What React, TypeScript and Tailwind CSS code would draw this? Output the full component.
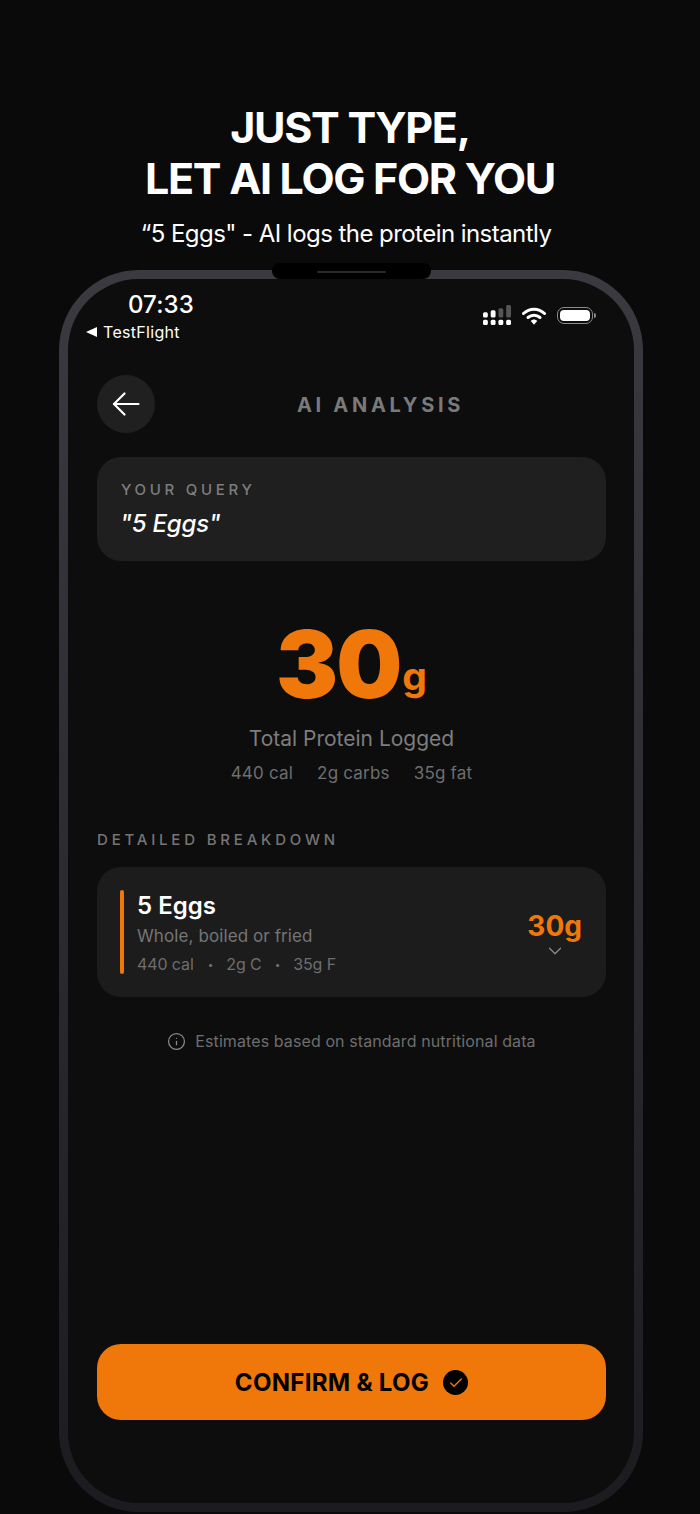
import React from "react";
import { ChevronDown, Info, Check } from "lucide-react";

const font = { fontFamily: "Inter, 'Noto Sans', sans-serif" };

function StatusIcons() {
  return (
    <div className="flex items-center">
      <svg width="28" height="21" viewBox="0 0 29 20" preserveAspectRatio="none" className="block">
        <rect x="0" y="7" width="5" height="5" rx="1.5" fill="#fff" />
        <rect x="0" y="14" width="5" height="5" rx="1.5" fill="#fff" />
        <rect x="8" y="5" width="5" height="7" rx="1.5" fill="#fff" />
        <rect x="8" y="14" width="5" height="5" rx="1.5" fill="#fff" />
        <rect x="16" y="3" width="5" height="9" rx="1.5" fill="#555" />
        <rect x="16" y="14" width="5" height="5" rx="1.5" fill="#fff" />
        <rect x="24" y="0" width="5" height="12" rx="1.5" fill="#555" />
        <rect x="24" y="14" width="5" height="5" rx="1.5" fill="#fff" />
      </svg>
      <svg width="24" height="20" viewBox="0 0 24 20" className="ml-[11px] block">
        <path d="M1.5 7.5C7.5 1.8 16.5 1.8 22.5 7.5" fill="none" stroke="#fff" strokeWidth="3" strokeLinecap="round" />
        <path d="M6 11.5C9.5 8.5 14.5 8.5 18 11.5" fill="none" stroke="#fff" strokeWidth="3" strokeLinecap="round" />
        <path d="M8.8 15C10.5 13 13.5 13 15.2 15L12 18.8Z" fill="#fff" />
      </svg>
      <div className="relative ml-[11px] h-[17px] w-[36px] rounded-[7px] border border-[#8a8a8a] p-[2px]">
        <div className="h-full w-full rounded-[4px] bg-white" />
        <div className="absolute right-[-4px] top-[5px] h-[5px] w-[2px] rounded-r bg-[#8a8a8a]" />
      </div>
    </div>
  );
}

export default function App() {
  return (
    <div className="h-[1514px] w-[700px] overflow-hidden bg-[#0a0a0a] text-white" style={font}>
      <div className="flex h-[263px] flex-col items-center pt-[102px]">
        <h1 className="text-center text-[43px] font-bold uppercase leading-[51px] tracking-[-1.3px] text-white">
          Just type,
          <br />
          Let AI log for you
        </h1>
        <p className="mt-[14px] pr-[8px] text-[24px] leading-[32px] tracking-[-0.55px] text-white">“5 Eggs" - AI logs the protein instantly</p>
      </div>

      <div className="relative mx-[59px] mt-[7px] h-[1242px] w-[584px] rounded-[80px] bg-gradient-to-b from-[#3a3a40] to-[#1c1c20] p-[9px]">
        <div className="absolute left-[213px] top-[-7px] flex h-[16px] w-[159px] justify-center rounded-full bg-black pt-[8px]">
          <div className="h-[2px] w-[69px] rounded-full bg-[#2a2a2a]" />
        </div>

        <div className="flex h-full flex-col rounded-[71px] bg-[#0d0d0d] pl-[29px] pr-[28px]">
          <div className="flex h-[66px] items-start justify-between pr-[13px] pt-[14px]">
            <div className="-ml-[11px] flex flex-col">
              <span className="ml-[42px] text-[24px] font-medium leading-[24px] tracking-[0.1px] text-white">07:33</span>
              <div className="mt-[5px] flex items-center gap-[6px]">
                <svg width="11" height="10" viewBox="0 0 11 10"><path d="M11 0V10L0 5Z" fill="#fff" /></svg>
                <span className="text-[16px] font-normal leading-[20px] tracking-[0.3px] text-white">TestFlight</span>
              </div>
            </div>
            <div className="pt-[12px]">
              <StatusIcons />
            </div>
          </div>

          <div className="mt-[30px] flex items-center">
            <button className="flex h-[58px] w-[58px] items-center justify-center rounded-full bg-[#202020]">
              <svg width="28" height="24" viewBox="0 0 28 24" fill="none" stroke="#fff" strokeWidth="2.2" strokeLinecap="round" strokeLinejoin="round">
                <path d="M26.5 12H2" />
                <path d="M12.5 1.5 2 12l10.5 10.5" />
              </svg>
            </button>
            <div className="flex-1 pt-[1px] text-center text-[20px] font-bold leading-[24px] tracking-[3.7px] text-[#7a7a7a]">AI ANALYSIS</div>
          </div>

          <div className="mt-[24px] flex h-[104px] flex-col rounded-[24px] bg-[#1f1f1f] px-[24px] pt-[24px]">
            <span className="text-[15px] font-medium leading-[18px] tracking-[3.7px] text-[#7d7d7d]">YOUR QUERY</span>
            <span className="mt-[10px] -ml-[1px] text-[24px] font-medium italic leading-[30px] tracking-[-0.2px] text-white">"5 Eggs"</span>
          </div>

          <div className="mt-[48px] flex flex-col items-center">
            <div className="flex items-end">
              <span className="text-[93px] font-black leading-[110px] tracking-[-2px] text-[#f0780a]">30</span>
              <span className="mb-[23px] ml-[2px] text-[39px] font-bold leading-[40px] text-[#f0780a]">g</span>
            </div>
            <div className="mt-[5px] text-[21px] leading-[30px] text-[#7d7d7d]">Total Protein Logged</div>
            <div className="mt-[7px] flex gap-[24px] text-[17px] leading-[24px] tracking-[0.2px] text-[#6e6e6e]">
              <span>440 cal</span>
              <span>2g carbs</span>
              <span>35g fat</span>
            </div>
          </div>

          <div className="mt-[46px] text-[15px] font-medium leading-[18px] tracking-[3.8px] text-[#757575]">DETAILED BREAKDOWN</div>

          <div className="mt-[18px] flex h-[130px] items-center rounded-[24px] bg-[#1c1c1c] pl-[23px] pr-[24px]">
            <div className="h-[84px] w-[4px] rounded-full bg-[#f0780a]" />
            <div className="ml-[13px] flex flex-1 flex-col pt-[3px]">
              <span className="text-[24px] font-semibold leading-[30px] text-white">5 Eggs</span>
              <span className="mt-[3px] text-[17px] leading-[24px] tracking-[0.1px] text-[#757575]">Whole, boiled or fried</span>
              <div className="mt-[4px] flex items-center text-[16px] leading-[24px] tracking-[-0.1px] text-[#6e6e6e]">
                <span>440 cal</span>
                <span className="ml-[14px] mr-[13px] text-[10px]">•</span>
                <span>2g C</span>
                <span className="mx-[13px] text-[10px]">•</span>
                <span>35g F</span>
              </div>
            </div>
            <div className="flex flex-col items-center pt-[7px]">
              <span className="text-[28px] font-bold leading-[32px] text-[#f0780a]">30g</span>
              <ChevronDown size={22} strokeWidth={1.4} color="#8a8a8a" className="-mt-[2px]" />
            </div>
          </div>

          <div className="mt-[33px] flex items-center justify-center gap-[9px] text-[16px] leading-[22px] tracking-[0.1px] text-[#6e6e6e]">
            <Info size={19} strokeWidth={1.6} color="#8a8a8a" />
            <span>Estimates based on standard nutritional data</span>
          </div>

          <div className="flex-1" />

          <button className="mb-[83px] flex h-[76px] items-center justify-center gap-[14px] rounded-[24px] bg-[#f0780a] pt-[1px]">
            <span className="text-[24px] font-bold leading-[30px] tracking-[0.3px] text-black">CONFIRM &amp; LOG</span>
            <span className="flex h-[25px] w-[25px] items-center justify-center rounded-full bg-black">
              <Check size={16} strokeWidth={2} color="#f0780a" />
            </span>
          </button>
        </div>
      </div>
    </div>
  );
}
